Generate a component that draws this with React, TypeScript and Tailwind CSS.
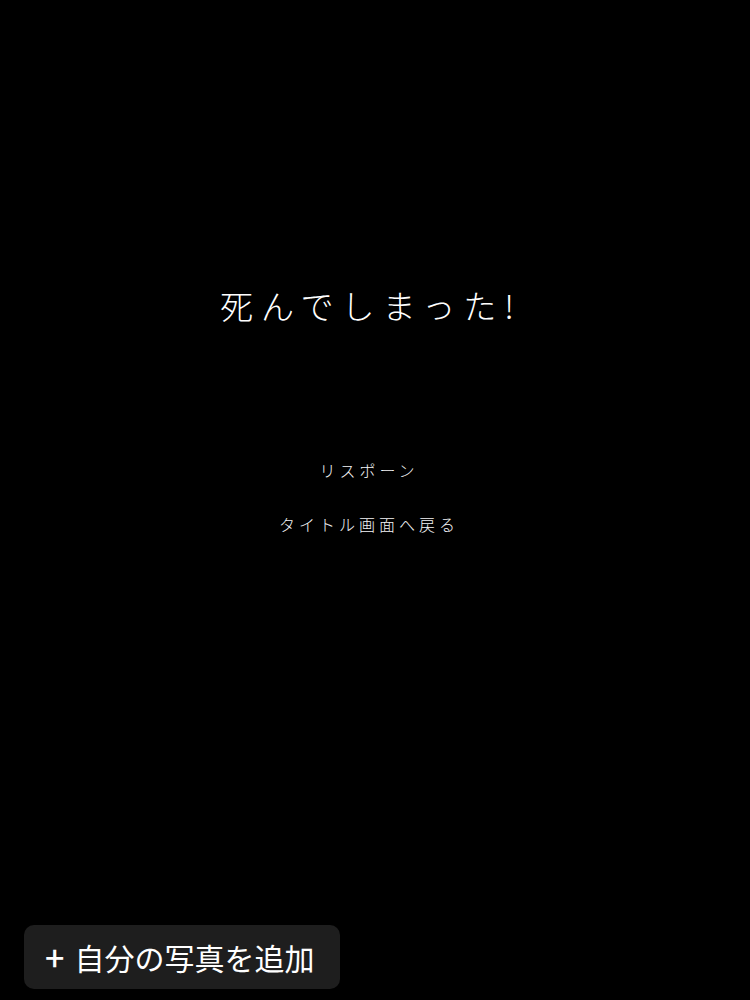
import React from "react";

const jp = { fontFamily: '"Noto Sans CJK JP", "Noto Sans", sans-serif' };

export default function App() {
  return (
    <div className="relative h-[1000px] w-[750px] overflow-hidden bg-black text-white" style={jp}>
      <div className="flex flex-col items-center pt-[280px] pr-[16px]">
        <h1 className="text-[33px] font-light leading-[50px] tracking-[8px] pl-[8px]">死んでしまった!</h1>
        <div className="mt-[130px] flex flex-col items-center gap-[34px]">
          <button className="text-[16px] font-light leading-[20px] tracking-[4px] pl-[4px] text-gray-100">リスポーン</button>
          <button className="text-[16px] font-light leading-[20px] tracking-[4px] pl-[4px] text-gray-100">タイトル画面へ戻る</button>
        </div>
      </div>
      <button className="absolute left-[24px] top-[925px] flex h-[64px] w-[316px] items-center gap-[10px] rounded-[10px] bg-[#1e1e1e] pl-[21px] text-[30px] text-white">
        <span className="text-[34px] font-medium leading-none">+</span>
        <span className="leading-none">自分の写真を追加</span>
      </button>
    </div>
  );
}
